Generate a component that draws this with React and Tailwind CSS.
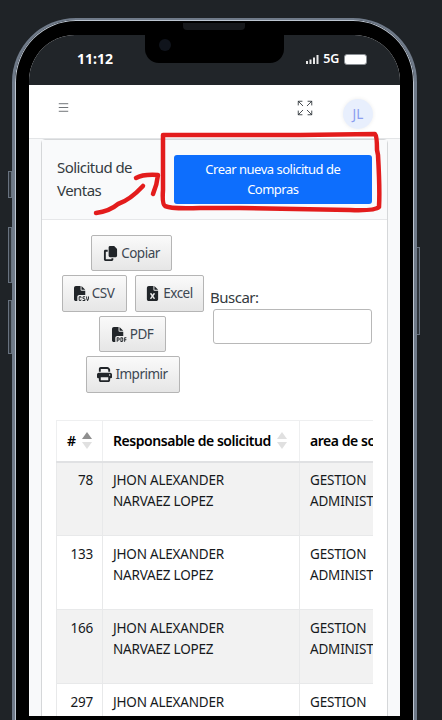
import { Expand, Menu } from 'lucide-react'
import { FaCopy, FaFileCsv, FaFileExcel, FaFilePdf, FaPrint } from 'react-icons/fa6'

const rows = [
  { id: 78, bg: 'bg-[#f2f2f2]', pad: 'pt-[7px]' },
  { id: 133, bg: 'bg-white', pad: 'pt-[8px]' },
  { id: 166, bg: 'bg-[#f2f2f2]', pad: 'pt-[8px]' },
  { id: 297, bg: 'bg-white', pad: 'pt-[8px]' },
]

function ExportButton({ icon: Icon, label, className, iconSize = 15 }) {
  return (
    <button className={`flex items-center justify-center gap-[3px] border border-[#b5b5b5] rounded-[2px] bg-gradient-to-b from-[#fafafa] to-[#e6e6e6] text-[13.5px] tracking-[-0.5px] text-[#3d4752] ${className}`}>
      <Icon size={iconSize} className="text-[#212529]" />
      <span>{label}</span>
    </button>
  )
}

function SortArrows({ up = '#a6a6a6', down = '#e0e0e0' }) {
  return (
    <svg width="10" height="17" viewBox="0 0 10 17" className="shrink-0">
      <path d="M5 0l5 7H0z" fill={up} />
      <path d="M5 17l5-7H0z" fill={down} />
    </svg>
  )
}

function SideButton({ className }) {
  return <div className={`absolute w-[4px] border border-[#68727f] bg-[#2e343b] ${className}`}></div>
}

function Annotation() {
  return (
    <svg width="442" height="720" className="absolute left-0 top-0 pointer-events-none" fill="none" stroke="#e31c1c" strokeLinecap="round" strokeLinejoin="round">
      <path strokeWidth="4.5" d="M163 135 L300 135 L375 134 Q377 136 377 150 L378 155 Q380 190 379 207 Q375 211 350 210 L240 208 L200 208 Q170 209 165 206 Q162 204 163 190 Z" />
      <path strokeWidth="4.5" d="M96 213 Q110 211 118 204 Q130 200 143 186" />
      <path strokeWidth="4.5" d="M136 178 Q143 174 158 175 Q157 185 153 194" />
    </svg>
  )
}

export default function App() {
  return (
    <div className="relative w-[442px] h-[720px] overflow-hidden bg-[#1f2327] [font-family:'Noto_Sans',sans-serif]">
      <SideButton className="left-[8px] top-[171px] h-[27px]" />
      <SideButton className="left-[8px] top-[227px] h-[56px]" />
      <SideButton className="left-[8px] top-[300px] h-[54px]" />
      <SideButton className="left-[416px] top-[247px] h-[88px]" />

      {/* phone */}
      <div className="relative ml-[12px] mt-[18px] w-[405px] h-[720px] rounded-t-[64px] border-x-[3px] border-t-[2px] border-[#6f7a89] bg-black px-[14px] pt-[15px] shadow-[inset_0_0_0_1px_#bcc5d0]">
        <div className="absolute left-[168px] top-[3px] w-[62px] h-[7px] rounded-b-[4px] bg-[#16181b]"></div>

        <div className="w-[371px] h-[681px] rounded-t-[46px] overflow-hidden bg-[#f8f9fa]">
          {/* status bar */}
          <div className="relative h-[50px] bg-[#212529] text-white">
            <div className="absolute left-[116px] top-0 w-[139px] h-[28px] rounded-b-[14px] bg-black"></div>
            <div className="absolute left-[130px] top-[4px] w-[12px] h-[12px] rounded-full bg-[#10141c]"></div>
            <div className="flex items-center justify-between pl-[48px] pr-[33px] pt-[14px]">
              <span className="text-[14px] font-bold leading-[20px]">11:12</span>
              <div className="flex items-center gap-[4px]">
                <svg width="13" height="9" viewBox="0 0 13 9" fill="#e8e8e8">
                  <rect x="0" y="6" width="2" height="3" />
                  <rect x="3.5" y="4.5" width="2" height="4.5" />
                  <rect x="7" y="2.5" width="2" height="6.5" />
                  <rect x="10.5" y="0" width="2" height="9" />
                </svg>
                <span className="text-[12.5px] font-semibold leading-[14px] tracking-[-0.3px]">5G</span>
                <div className="ml-[1px] w-[23px] h-[11px] rounded-[3px] border border-[#8a8f94] bg-white"></div>
              </div>
            </div>
          </div>

          {/* top nav */}
          <div className="relative flex h-[54px] items-start border-b border-[#e3e5e7] bg-white pl-[28px]">
            <Menu size={13} strokeWidth={1.3} className="mt-[16px] text-[#343a40]" />
            <Expand size={18} strokeWidth={1.2} className="absolute left-[267px] top-[14px] text-[#343a40]" />
            <div className="absolute left-[314px] top-[14px] flex h-[30px] w-[30px] items-center justify-center rounded-full bg-[#e8effd] text-[13.5px] text-[#8c9ef0] shadow-[0_0_4px_rgba(0,0,0,0.08)]">JL</div>
          </div>

          {/* card */}
          <div className="mx-[12px] h-[640px] rounded-t-[4px] border border-[#d5d7d9] bg-white">
            <div className="flex h-[80px] items-center border-b border-[#e6e7e9] bg-[#f9fafb] pl-[15px] pr-[15px]">
              <div className="w-[117px] pb-[2px] text-[15px] leading-[23px] tracking-[-0.55px] text-[#343a40]">Solicitud de<br />Ventas</div>
              <button className="h-[49px] w-[199px] rounded-[3px] bg-[#0d6efd] pb-[2px] text-[13px] leading-[20px] tracking-[-0.5px] text-white">Crear nueva solicitud de<br />Compras</button>
            </div>

            <div className="px-[14px] pt-[15px]">
              <div className="flex">
                <div className="flex w-[153px] flex-col items-center gap-[4px]">
                  <ExportButton icon={FaCopy} label="Copiar" className="mr-[2px] h-[36px] w-[81px]" />
                  <div className="flex gap-[8px]">
                    <ExportButton icon={FaFileCsv} label="CSV" className="h-[37px] w-[65px]" />
                    <ExportButton icon={FaFileExcel} label="Excel" className="h-[37px] w-[69px]" />
                  </div>
                  <ExportButton icon={FaFilePdf} label="PDF" className="h-[36px] w-[67px]" />
                  <ExportButton icon={FaPrint} label="Imprimir" className="h-[37px] w-[94px]" />
                </div>
                <div className="ml-[1px] pt-[51px]">
                  <div className="text-[15px] leading-[23px] tracking-[-0.5px] text-[#343a40]">Buscar:</div>
                  <div className="ml-[3px] h-[35px] w-[159px] rounded-[3px] border border-[#b8b8b8] bg-white"></div>
                </div>
              </div>

              {/* table */}
              <div className="mt-[27px] w-[317px] overflow-hidden">
                <table className="w-[460px] table-fixed border-collapse text-[13.5px] leading-[21px] tracking-[-0.2px] text-[#16191c]">
                  <colgroup>
                    <col className="w-[46px]" />
                    <col className="w-[197px]" />
                    <col className="w-[217px]" />
                  </colgroup>
                  <thead>
                    <tr className="h-[41px] border-b-2 border-[#e0e1e3] text-[14px] tracking-[-0.45px] text-black">
                      <th className="border border-[#eeeff0] border-b-0 pl-[10px] text-left font-semibold">
                        <div className="flex items-center gap-[6px]">#<SortArrows up="#8f8f8f" /></div>
                      </th>
                      <th className="border border-[#eeeff0] border-b-0 pl-[10px] text-left font-semibold">
                        <div className="flex items-center gap-[6px] whitespace-nowrap">Responsable de solicitud<SortArrows up="#e0e0e0" /></div>
                      </th>
                      <th className="border border-[#eeeff0] border-b-0 pl-[10px] text-left font-semibold whitespace-nowrap">area de solicitud</th>
                    </tr>
                  </thead>
                  <tbody>
                    {rows.map((r) => (
                      <tr key={r.id} className={`h-[74px] ${r.bg}`}>
                        <td className={`border border-[#e8e9ea] pr-[9px] align-top text-right ${r.pad}`}>{r.id}</td>
                        <td className={`border border-[#e8e9ea] pl-[10px] align-top ${r.pad}`}>JHON ALEXANDER<br />NARVAEZ LOPEZ</td>
                        <td className={`border border-[#e8e9ea] pl-[10px] align-top whitespace-nowrap ${r.pad}`}>GESTION<br />ADMINISTRATIVA</td>
                      </tr>
                    ))}
                  </tbody>
                </table>
              </div>
            </div>
          </div>
        </div>
      </div>

      <Annotation />
    </div>
  )
}
